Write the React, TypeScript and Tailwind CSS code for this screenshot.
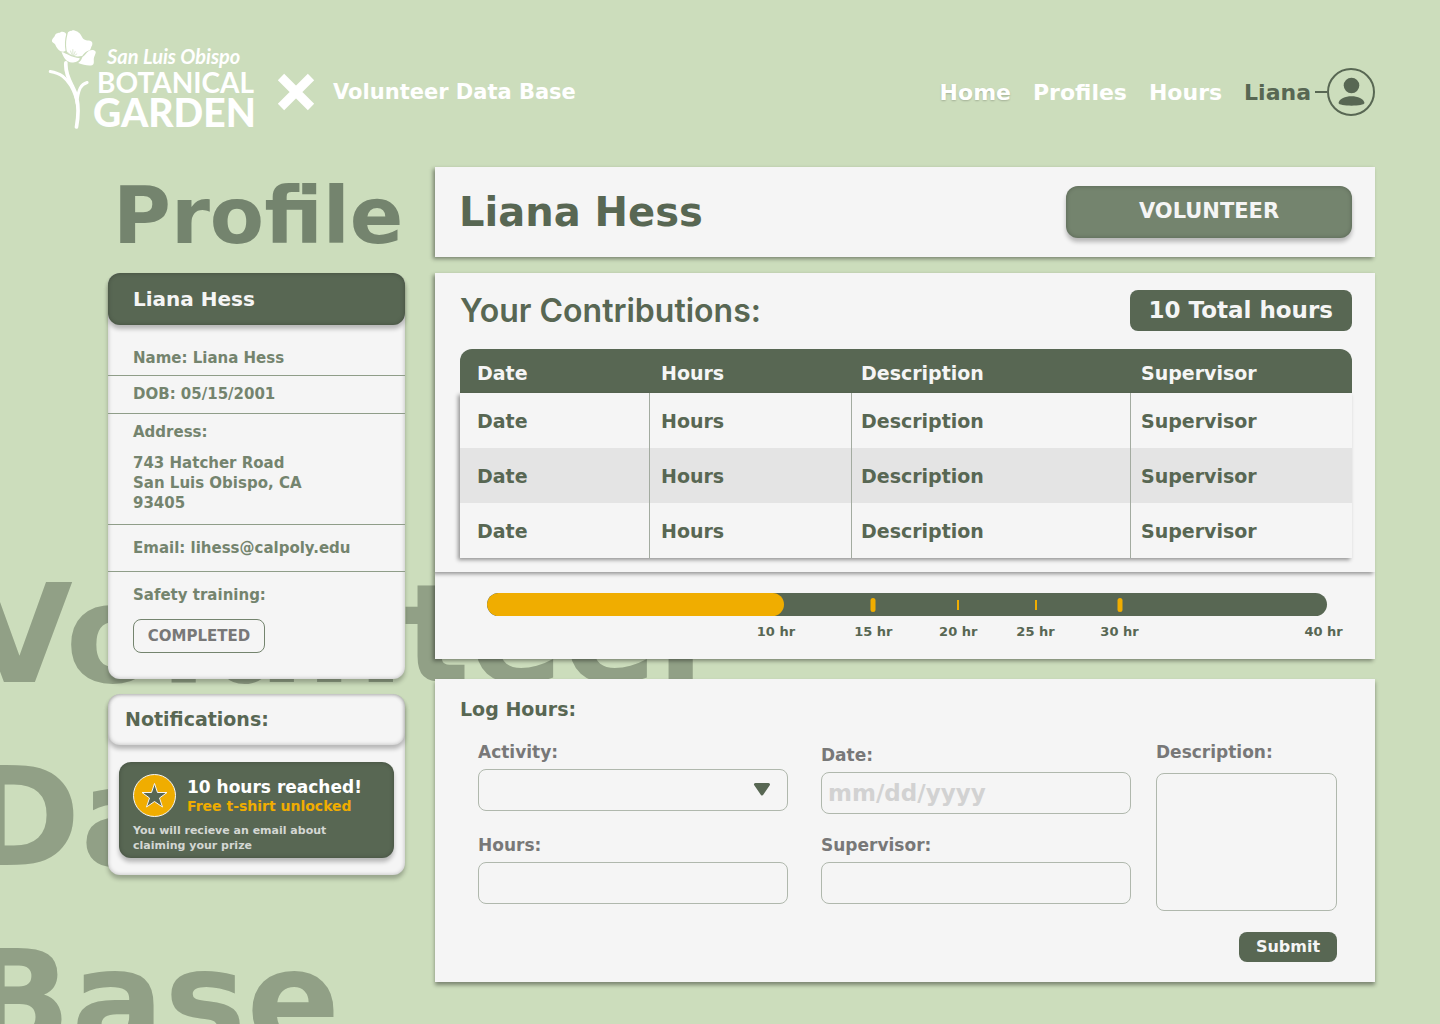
import React from "react";

const PANEL_SHADOW = "shadow-[-2px_2px_4px_rgba(0,0,0,0.4)]";

const navLinks = ["Home", "Profiles", "Hours"];

const tableRows = [
  ["Date", "Hours", "Description", "Supervisor"],
  ["Date", "Hours", "Description", "Supervisor"],
  ["Date", "Hours", "Description", "Supervisor"],
];

const milestones = [
  { label: "10 hr", at: 34.4, tick: "none" },
  { label: "15 hr", at: 46, tick: "large" },
  { label: "20 hr", at: 56.1, tick: "small" },
  { label: "25 hr", at: 65.3, tick: "small" },
  { label: "30 hr", at: 75.3, tick: "large" },
  { label: "40 hr", at: 99.6, tick: "none" },
];

function FlowerMark() {
  return (
    <svg viewBox="24 28 146 298" className="h-[99px] w-[49px] shrink-0" fill="#fff" aria-hidden="true">
      <path d="M35 60C36 52 43 50 45 42C50 35 57 38 62 34C70 32 77 36 78 41C74 56 73 74 76 90C74 94 67 94 61 92C53 88 48 80 45 72C42 66 35 66 35 60Z" />
      <path d="M82 40C84 30 91 33 97 29C108 29 119 36 124 46C129 58 138 60 150 60C157 62 158 68 156 74C152 80 153 86 149 89C139 91 132 98 126 106C112 109 98 107 90 102C84 98 80 94 79 88C76 70 78 55 82 40Z" />
      <path d="M64 94C80 98 92 110 119 113C117 122 106 126 95 126C79 124 71 114 64 94Z" />
      <path d="M127 109C134 106 139 95 148 90C155 87 164 88 167 94C167 102 161 107 161 115C161 123 163 131 156 134C142 136 128 132 114 127C121 123 124 117 127 109Z" />
      <g fill="none" stroke="#ccddbc" strokeWidth="2" strokeLinecap="round">
        <path d="M94 105L84 97M96 105L91 91M98 105V87M100 105L105 93M102 106L110 100" />
      </g>
      <g fill="none" stroke="#fff" strokeLinecap="round">
        <path d="M77 127C75 158 88 180 98 200C116 234 118 270 109 320" strokeWidth="11" />
        <path d="M30 153C62 158 77 172 92 196C100 210 108 226 111 250" strokeWidth="9" />
        <path d="M141 186C121 192 116 208 112 232" strokeWidth="9" />
      </g>
    </svg>
  );
}

function Header() {
  return (
    <header className="relative flex items-end justify-between pt-[30px] pr-[65px] pb-[38px] pl-12 text-white">
      <div className="flex items-end">
        <a href="#" aria-label="San Luis Obispo Botanical Garden" className="flex items-end font-['Lato',sans-serif]">
          <FlowerMark />
          <span className="-ml-1 flex w-[168px] flex-col whitespace-nowrap">
            <span className="pl-3.5 text-[20px] leading-6 italic">San Luis Obispo</span>
            <span className="pl-1 text-[28px] leading-7 font-bold">BOTANICAL</span>
            <span className="text-[39px] leading-[33px] font-black">GARDEN</span>
          </span>
        </a>
        <div className="mb-[13px] flex h-12 items-center gap-[18px] pl-4">
          <svg viewBox="0 0 38 38" className="size-[38px]" stroke="#fff" strokeWidth="9" aria-hidden="true">
            <path d="M4 4L34 34M34 4L4 34" />
          </svg>
          <span className="text-[21px] leading-6 whitespace-nowrap">Volunteer Data Base</span>
        </div>
      </div>
      <nav className="mb-[13px] flex h-12 items-center gap-[22px] text-[22px]">
        {navLinks.map((name) => (
          <a key={name} href="#" className="first:[text-shadow:0_1px_2px_rgba(0,0,0,0.2)]">
            {name}
          </a>
        ))}
        <a href="#" className="flex items-center text-[#586753]">
          Liana
          <span className="ml-1 h-0.5 w-3 bg-[#586753]" />
          <svg viewBox="0 0 48 48" className="size-12" fill="#586753" aria-hidden="true">
            <circle cx="24" cy="24" r="23" fill="none" stroke="#586753" strokeWidth="2" />
            <circle cx="24.500" cy="17.500" r="7.800" />
            <path d="M11.500 35C13 26 36 26 37.500 35C37.500 38.500 11.500 38.500 11.500 35Z" />
          </svg>
        </a>
      </nav>
    </header>
  );
}

function ProfileCard() {
  return (
    <section className="rounded-xl bg-[#f5f5f5] text-[15px] leading-5 text-[#74846e] shadow-[0_4px_4px_rgba(0,0,0,0.25),inset_0_0_4px_rgba(0,0,0,0.25)]">
      <h2 className="flex h-[52px] items-center rounded-xl bg-[#586753] pl-[25px] text-[20px] text-[#f5f5f5] shadow-[0_4px_4px_rgba(0,0,0,0.25),inset_0_0_4px_rgba(0,0,0,0.25)]">
        Liana Hess
      </h2>
      <p className="border-b border-[#8f9d89] px-[25px] pt-[23px] pb-[7px]">Name: Liana Hess</p>
      <p className="border-b border-[#8f9d89] px-[25px] pt-2 pb-[9px]">DOB: 05/15/2001</p>
      <div className="border-b border-[#8f9d89] px-[25px] pt-2 pb-[11px]">
        <p>Address:</p>
        <p className="mt-[11px]">
          743 Hatcher Road
          <br />
          San Luis Obispo, CA
          <br />
          93405
        </p>
      </div>
      <p className="border-b border-[#8f9d89] px-[25px] py-[13px] whitespace-nowrap">Email: lihess@calpoly.edu</p>
      <div className="px-[25px] pt-[13px] pb-[26px]">
        <p>Safety training:</p>
        <span className="mt-3.5 flex h-[34px] w-[132px] items-center justify-center rounded-lg border border-[#74846e] text-[#787878]">
          COMPLETED
        </span>
      </div>
    </section>
  );
}

function Notifications() {
  return (
    <section className="mt-[15px] rounded-xl bg-[#f5f5f5] pb-[17px] shadow-[0_4px_4px_rgba(0,0,0,0.25),inset_0_0_4px_rgba(0,0,0,0.25)]">
      <h2 className="flex h-[51px] items-center rounded-xl pl-[17px] text-[19px] text-[#586753] shadow-[0_4px_4px_rgba(0,0,0,0.25),inset_0_0_4px_rgba(0,0,0,0.25)]">
        Notifications:
      </h2>
      <article className="mx-[11px] mt-[17px] rounded-xl bg-[#586753] px-3.5 pt-3 pb-[5px] shadow-[0_4px_4px_rgba(0,0,0,0.25),inset_0_0_4px_rgba(0,0,0,0.25)]">
        <div className="flex items-center gap-[11px]">
          <svg viewBox="0 0 43 43" className="size-[43px] shrink-0" stroke="#f5f5f5" aria-hidden="true">
            <circle cx="21.500" cy="21.500" r="21" fill="#f0ad00" />
            <path
              d="M21.500 9.500L24.500 18.500H34L26.500 24L29.500 33L21.500 27.500L13.500 33L16.500 24L9 18.500H18.500Z"
              fill="#586753"
              strokeLinejoin="round"
            />
          </svg>
          <div className="whitespace-nowrap">
            <h3 className="text-[17px] leading-5 text-white">10 hours reached!</h3>
            <p className="text-[14px] leading-[18px] text-[#f0ad00]">Free t-shirt unlocked</p>
          </div>
        </div>
        <p className="mt-1.5 text-[11px] leading-[15px] text-[#d4d7d3]">
          You will recieve an email about
          <br />
          claiming your prize
        </p>
      </article>
    </section>
  );
}

function Contributions() {
  return (
    <section className={`relative z-10 mt-4 bg-[#f5f5f5] pt-[17px] pr-[23px] pb-3.5 pl-[25px] ${PANEL_SHADOW}`}>
      <div className="flex h-[41px] items-center justify-between">
        <h2 className="font-['Inter',sans-serif] text-[32px] leading-10 font-semibold">Your Contributions:</h2>
        <span className="flex h-[41px] items-center rounded-lg bg-[#586753] px-[19px] text-[23px] text-[#f5f5f5]">
          10 Total hours
        </span>
      </div>
      <table className="mt-[18px] w-full table-fixed border-separate border-spacing-0 text-left text-[19px]">
        <colgroup>
          <col className="w-[189px]" />
          <col className="w-[202px]" />
          <col className="w-[279px]" />
          <col className="w-[222px]" />
        </colgroup>
        <thead>
          <tr className="h-11 text-[#f5f5f5] *:bg-[#586753] *:pt-1">
            <th className="rounded-tl-xl pl-[17px]">Date</th>
            <th className="pl-3">Hours</th>
            <th className="pl-2.5">Description</th>
            <th className="rounded-tr-xl pl-[11px]">Supervisor</th>
          </tr>
        </thead>
        <tbody className={PANEL_SHADOW}>
          {tableRows.map((row, i) => (
            <tr key={i} className="h-[55px] bg-[#f5f5f5] even:bg-[#e4e4e4]">
              <td className="pt-0.5 pl-[17px]">{row[0]}</td>
              <td className="border-l border-[#a3aba0] pt-0.5 pl-[11px]">{row[1]}</td>
              <td className="border-l border-[#a3aba0] pt-0.5 pl-[9px]">{row[2]}</td>
              <td className="border-l border-[#a3aba0] pt-0.5 pl-2.5">{row[3]}</td>
            </tr>
          ))}
        </tbody>
      </table>
    </section>
  );
}

function HoursProgress() {
  return (
    <section className={`bg-[#f5f5f5] pt-[21px] pr-12 pb-[17px] pl-[52px] ${PANEL_SHADOW}`}>
      <div
        role="progressbar"
        aria-label="Volunteer hours"
        aria-valuenow={10}
        aria-valuemin={0}
        aria-valuemax={40}
        className="relative h-[23px] overflow-hidden rounded-full bg-[#586753]"
      >
        <div className="h-full w-[35.4%] rounded-full bg-[#f0ad00]" />
        {milestones.map((m) =>
          m.tick === "none" ? null : (
            <span
              key={m.label}
              className={
                m.tick === "large"
                  ? "absolute top-1/2 h-3.5 w-[5px] -translate-1/2 rounded-full bg-[#f0ad00]"
                  : "absolute top-1/2 h-2.5 w-0.5 -translate-1/2 bg-[#f0ad00]"
              }
              style={{ left: `${m.at}%` }}
            />
          ),
        )}
      </div>
      <div className="relative mt-[6px] h-5 text-[13px] leading-5">
        {milestones.map((m) => (
          <span key={m.label} className="absolute -translate-x-1/2 whitespace-nowrap" style={{ left: `${m.at}%` }}>
            {m.label}
          </span>
        ))}
      </div>
    </section>
  );
}

const FIELD = "block w-full rounded-lg border border-[#b0b8ad] bg-transparent outline-none";

function LogHours() {
  return (
    <section className="mt-5 bg-[#f5f5f5] pt-[18px] pr-[38px] pb-5 pl-[25px] shadow-[0_3px_4px_rgba(0,0,0,0.4)]">
      <h2 className="text-[19px] leading-6">Log Hours:</h2>
      <form className="mt-5 pl-[18px]" onSubmit={(e) => e.preventDefault()}>
        <div className="flex items-start text-[17px] leading-[22px] text-[#787878]">
          <div className="flex h-[163px] flex-1 flex-col justify-between">
            <div>
              <label htmlFor="activity" className="block">
                Activity:
              </label>
              <div className="relative mt-1.5">
                <select id="activity" className={`${FIELD} h-[42px] appearance-none px-2`} defaultValue="">
                  <option value="" />
                </select>
                <svg
                  viewBox="0 0 18 16"
                  className="pointer-events-none absolute top-3 right-[17px] h-4 w-[18px]"
                  fill="#586753"
                  stroke="#586753"
                  strokeWidth="3"
                  strokeLinejoin="round"
                  aria-hidden="true"
                >
                  <path d="M2.500 3.500H15.500L9 13Z" />
                </svg>
              </div>
            </div>
            <div>
              <label htmlFor="hours" className="block">
                Hours:
              </label>
              <input id="hours" type="text" className={`${FIELD} mt-1.5 h-[42px] px-2`} />
            </div>
          </div>
          <div className="ml-[33px] flex h-[163px] flex-1 flex-col justify-between pt-[3px]">
            <div>
              <label htmlFor="date" className="block">
                Date:
              </label>
              <input
                id="date"
                type="text"
                placeholder="mm/dd/yyyy"
                className={`${FIELD} mt-1.5 h-[42px] px-1.5 text-[23px] placeholder:text-[#d2d2d2]`}
              />
            </div>
            <div>
              <label htmlFor="supervisor" className="block">
                Supervisor:
              </label>
              <input id="supervisor" type="text" className={`${FIELD} mt-1.5 h-[42px] px-2`} />
            </div>
          </div>
          <div className="ml-[25px] w-[181px]">
            <label htmlFor="description" className="block">
              Description:
            </label>
            <textarea id="description" className={`${FIELD} mt-2.5 h-[138px] resize-none p-2`} />
          </div>
        </div>
        <div className="mt-[21px] flex justify-end">
          <button type="submit" className="h-[30px] w-[98px] rounded-lg bg-[#586753] text-[16px] font-bold text-[#f5f5f5]">
            Submit
          </button>
        </div>
      </form>
    </section>
  );
}

export default function App() {
  return (
    <div className="relative min-h-screen overflow-hidden bg-[#ccddbc] pb-[42px] font-['DejaVu_Sans',sans-serif] font-bold">
      <div
        aria-hidden="true"
        className="absolute top-[543px] -left-[34px] h-[481px] overflow-hidden text-[138px] leading-[183px] whitespace-nowrap text-[#91a086]"
      >
        Volunteer
        <br />
        Data
        <br />
        Base
      </div>
      <Header />
      <main className="relative flex items-start gap-[30px] pr-[65px] pl-[108px]">
        <aside className="w-[297px] shrink-0">
          <h1 className="h-[106px] pt-2.5 pl-[5px] text-[79px] leading-none text-[#74846e]">Profile</h1>
          <ProfileCard />
          <Notifications />
        </aside>
        <div className="min-w-0 flex-1 text-[#586753]">
          <section className={`flex h-[90px] items-center justify-between bg-[#f5f5f5] pr-[23px] pl-6 ${PANEL_SHADOW}`}>
            <h2 className="text-[40px] leading-none">Liana Hess</h2>
            <button
              type="button"
              className="h-[52px] w-[286px] rounded-xl bg-[#74846e] text-[21px] font-bold text-[#f5f5f5] shadow-[0_4px_4px_rgba(0,0,0,0.25),inset_0_0_4px_rgba(0,0,0,0.25)]"
            >
              VOLUNTEER
            </button>
          </section>
          <Contributions />
          <HoursProgress />
          <LogHours />
        </div>
      </main>
    </div>
  );
}
